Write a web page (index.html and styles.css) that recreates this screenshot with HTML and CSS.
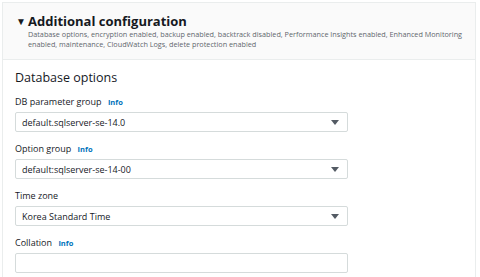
FILE: index.html
```html
<!DOCTYPE html>
<html lang="en">
<head>
    <meta charset="UTF-8">
    <title>Additional configuration</title>
    <link rel="stylesheet" href="styles.css">
</head>
<body>
<div class="panel">
    <div class="panel-header">
        <div class="title-row">
            <span class="caret">&#9660;</span>
            <h2>Additional configuration</h2>
        </div>
        <p class="summary">Database options, encryption enabled, backup enabled, backtrack disabled, Performance Insights enabled, Enhanced Monitoring enabled, maintenance, CloudWatch Logs, delete protection enabled</p>
    </div>
    <div class="panel-body">
        <h3>Database options</h3>

        <div class="field">
            <label>DB parameter group <a class="info">Info</a></label>
            <div class="select">
                <span>default.sqlserver-se-14.0</span>
                <span class="arrow"></span>
            </div>
        </div>

        <div class="field">
            <label>Option group <a class="info">Info</a></label>
            <div class="select">
                <span>default:sqlserver-se-14-00</span>
                <span class="arrow"></span>
            </div>
        </div>

        <div class="field">
            <label>Time zone</label>
            <div class="select">
                <span>Korea Standard Time</span>
                <span class="arrow"></span>
            </div>
        </div>

        <div class="field">
            <label>Collation <a class="info">Info</a></label>
            <div class="select input"></div>
        </div>
    </div>
</div>
</body>
</html>
```

FILE: styles.css
```css
body {
    margin: 0;
    background: #fff;
    font-family: "Open Sans", "Noto Sans", sans-serif;
    color: #16191f;
}

.panel {
    margin: 2px 4px 0 2px;
    border: 1px solid #eaeded;
    border-bottom: none;
    height: 275px;
    overflow: hidden;
}

.panel-header {
    background: #fafafa;
    border-bottom: 1px solid #eaeded;
    padding: 9px 12px 8px 13px;
    height: 39px;
}

.title-row {
    display: flex;
    align-items: center;
}

.caret {
    font-size: 10px;
    width: 12px;
    color: #16191f;
}

h2 {
    margin: 0;
    font-size: 13px;
    font-weight: 700;
    line-height: 18px;
}

.summary {
    margin: -1px 0 0 12px;
    font-size: 7.25px;
    line-height: 10px;
    color: #5f666d;
}

.panel-body {
    padding: 9px 0 0 12px;
}

h3 {
    margin: 0 0 9px;
    font-size: 12.5px;
    font-weight: 400;
    line-height: 18px;
}

.field {
    margin-bottom: 11px;
}

label {
    display: block;
    font-size: 9px;
    line-height: 12px;
    margin-bottom: 4px;
}

.info {
    color: #0073bb;
    font-weight: 700;
    font-size: 7.5px;
    margin-left: 4px;
}

.select {
    box-sizing: border-box;
    width: 333px;
    height: 20px;
    border: 1px solid #d5dbdb;
    border-radius: 2px;
    display: flex;
    align-items: center;
    justify-content: space-between;
    padding: 0 8px 0 6px;
    font-size: 9px;
}

.arrow {
    width: 0;
    height: 0;
    border-left: 4px solid transparent;
    border-right: 4px solid transparent;
    border-top: 5px solid #545b64;
}
```
